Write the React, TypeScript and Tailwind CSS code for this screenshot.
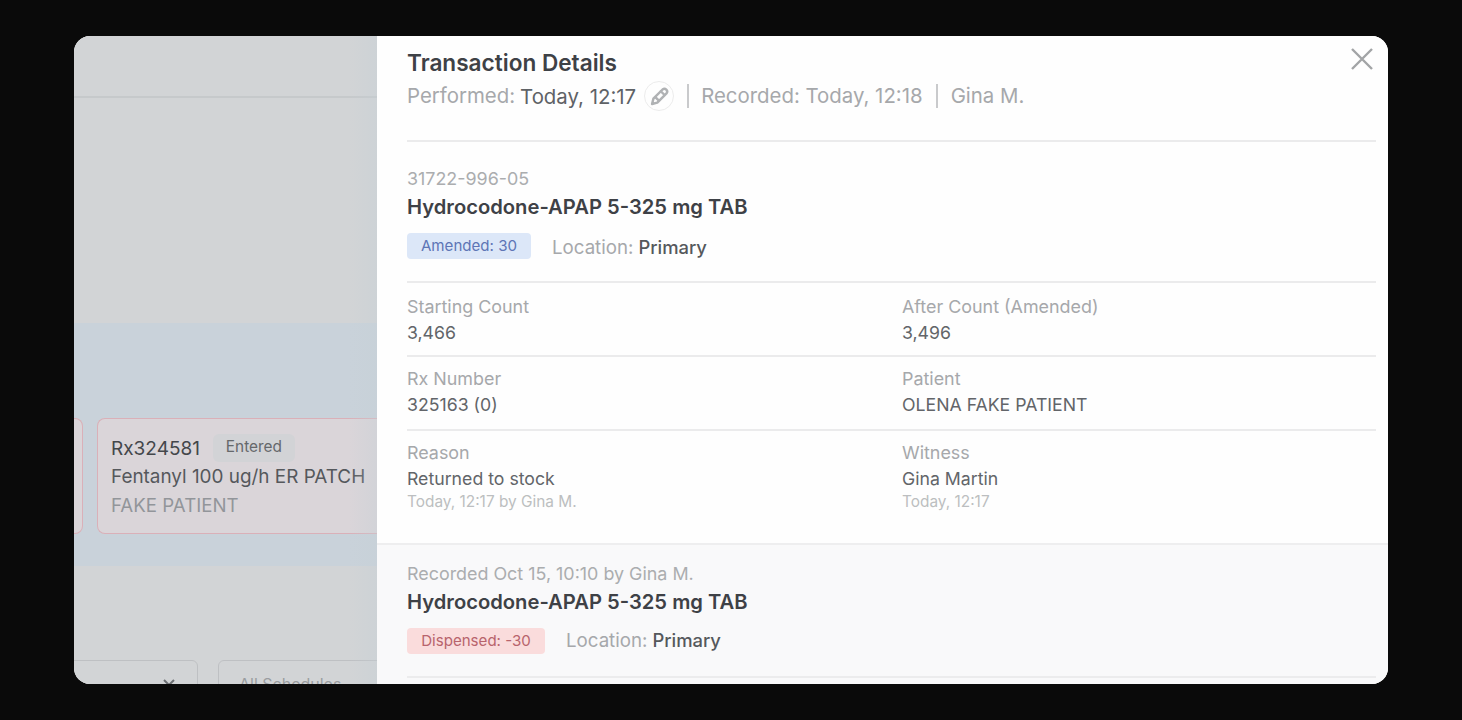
import React from "react";

const font = { fontFamily: "Inter, 'Noto Sans', sans-serif" };

function Field({ label, value, sub, first }: { label: string; value: string; sub?: string; first?: boolean }) {
  return (
    <div className={first ? "w-[495px] shrink-0" : "flex-1 min-w-0"}>
      <div className="text-[17.9px] leading-[24px] text-[#a6a8ab]">{label}</div>
      <div className="text-[17.7px] leading-[27px] text-[#626569]">{value}</div>
      {sub ? <div className="text-[15.4px] leading-[18px] text-[#bcbec0] pt-[1px]">{sub}</div> : null}
    </div>
  );
}

export default function App() {
  return (
    <div className="w-[1462px] h-[720px] bg-[#0a0a0a] pt-[36px] pl-[74px] overflow-hidden" style={font}>
      <div className="w-[1314px] h-[648px] rounded-[16px] overflow-hidden flex bg-white">
        {/* dimmed page behind the drawer */}
        <div className="relative w-[303px] shrink-0 bg-[#d2d4d6] flex flex-col overflow-hidden">
          <div className="h-[62px] shrink-0 border-b-2 border-[#c6c9cb]" />
          <div className="h-[225px] shrink-0" />
          <div className="h-[243px] shrink-0 bg-[#c9d2da] pt-[95px] flex gap-[14px]">
            <div className="w-[9px] h-[116px] shrink-0 bg-[#dad5d9] border border-l-0 border-[#dab0b8] rounded-r-[8px]" />
            <div className="w-[300px] h-[116px] shrink-0 bg-[#dad5d9] border border-r-0 border-[#dab0b8] rounded-l-[8px] pl-[13px] pt-[15px]">
              <div className="flex items-center gap-[13px] h-[28px]">
                <span className="text-[19px] pt-[2px] text-[#44474b]">Rx324581</span>
                <span className="h-[28px] w-[82px] text-center rounded-[6px] bg-[#d2d3d6] text-[15.4px] leading-[25px] text-[#65686b]">Entered</span>
              </div>
              <div className="text-[18.9px] leading-[30px] whitespace-nowrap text-[#55585c]">Fentanyl 100 ug/h ER PATCH</div>
              <div className="text-[18.7px] leading-[28px] text-[#92959a]">FAKE PATIENT</div>
            </div>
          </div>
          <div className="h-[94px] shrink-0" />
          <div className="flex gap-[20px] -ml-[20px]">
            <div className="relative w-[144px] h-[40px] shrink-0 border border-[#bec0c3] rounded-[6px]">
              <svg className="absolute left-[107px] top-[17px]" width="14" height="10" viewBox="0 0 14 10" fill="none" stroke="#6b6e72" strokeWidth="2">
                <path d="M2 2l5 5 5-5" />
              </svg>
            </div>
            <div className="w-[200px] h-[40px] shrink-0 border border-[#bec0c3] rounded-[6px] pl-[20px] pt-[11px] text-[16px] text-[#9a9da0] whitespace-nowrap">All Schedules</div>
          </div>
          <div className="absolute right-0 top-0 bottom-0 w-[28px] bg-gradient-to-r from-transparent to-[#c6d0d6]/40" />
        </div>

        {/* drawer */}
        <div className="flex-1 min-w-0 flex flex-col relative">
          <svg className="absolute left-[973px] top-[11px]" width="24" height="24" viewBox="0 0 24 24" fill="none" stroke="#a2a4a6" strokeWidth="2.4">
            <path d="M2 2l20 20M22 2L2 22" />
          </svg>

          <div className="h-[509px] shrink-0 pl-[30px] pr-[12px] border-b-2 border-[#eeeeef] bg-[#fefefe]">
            <div className="pt-[11px] text-[22.6px] leading-[32px] font-semibold text-[#3e4146] whitespace-nowrap">Transaction Details</div>
            <div className="flex items-center h-[32px] mt-[1px] text-[20.4px] whitespace-nowrap text-[#a6a8ab]">
              <span>Performed:</span>
              <span className="ml-[5px] pt-[2px] text-[#5f6266]">Today, 12:17</span>
              <span className="ml-[8px] w-[30px] h-[30px] rounded-full border border-[#ececec] flex items-center justify-center">
                <svg width="21" height="21" viewBox="0 0 24 24" fill="none" stroke="#b0b2b4" strokeWidth="2.8" strokeLinejoin="round" strokeLinecap="round">
                  <path d="M3.5 20.5l1.5-6L15.5 4a3.2 3.2 0 0 1 4.5 4.5L9.5 19z" />
                  <path d="M7.5 13l3.5 3.5M13.5 6l4 4" />
                </svg>
              </span>
              <span className="ml-[13px] w-[2px] h-[24px] bg-[#c9cacc]" />
              <span className="ml-[12px]">Recorded: Today, 12:18</span>
              <span className="ml-[13px] w-[2px] h-[24px] bg-[#c9cacc]" />
              <span className="ml-[13px]">Gina M.</span>
            </div>

            <div className="mt-[28px] border-t-2 border-[#ebebec] pt-[26px] pb-[22px]">
              <div className="text-[17.9px] leading-[22px] text-[#abadaf]">31722-996-05</div>
              <div className="text-[20.2px] leading-[33px] font-semibold text-[#3e4146] whitespace-nowrap">Hydrocodone-APAP 5-325 mg TAB</div>
              <div className="flex items-center mt-[10px] h-[26px]">
                <span className="h-[26px] w-[124px] rounded-[4px] bg-[#dce7f8] text-center text-[15.1px] leading-[25px] text-[#5e75b6]">Amended: 30</span>
                <span className="ml-[21px] pt-[4px] text-[18.7px] text-[#a6a8ab]">Location:</span>
                <span className="ml-[5px] pt-[4px] text-[18.4px] font-medium text-[#55585c]">Primary</span>
              </div>
            </div>

            <div className="border-t-2 border-[#ebebec] h-[74px] pt-[12px] flex">
              <Field first label="Starting Count" value="3,466" />
              <Field label="After Count (Amended)" value="3,496" />
            </div>
            <div className="border-t-2 border-[#ebebec] h-[74px] pt-[10px] flex">
              <Field first label="Rx Number" value="325163 (0)" />
              <Field label="Patient" value="OLENA FAKE PATIENT" />
            </div>
            <div className="border-t-2 border-[#ebebec] pt-[10px] flex">
              <Field first label="Reason" value="Returned to stock" sub="Today, 12:17 by Gina M." />
              <Field label="Witness" value="Gina Martin" sub="Today, 12:17" />
            </div>
          </div>

          <div className="flex-1 pl-[30px] pr-[12px] pt-[18px] bg-[#f9f9fa]">
            <div className="text-[17.9px] leading-[22px] text-[#abadaf]">Recorded Oct 15, 10:10 by Gina M.</div>
            <div className="text-[20.2px] leading-[33px] font-semibold text-[#3e4146] whitespace-nowrap">Hydrocodone-APAP 5-325 mg TAB</div>
            <div className="flex items-center mt-[10px] h-[26px]">
              <span className="h-[26px] w-[138px] rounded-[4px] bg-[#fadcdc] text-center text-[15.1px] leading-[25px] text-[#b8646c]">Dispensed: -30</span>
              <span className="ml-[21px] text-[18.7px] text-[#a6a8ab]">Location:</span>
              <span className="ml-[5px] text-[18.4px] font-medium text-[#55585c]">Primary</span>
            </div>
            <div className="mt-[22px] border-t-2 border-[#ececed]" />
          </div>
        </div>
      </div>
    </div>
  );
}
